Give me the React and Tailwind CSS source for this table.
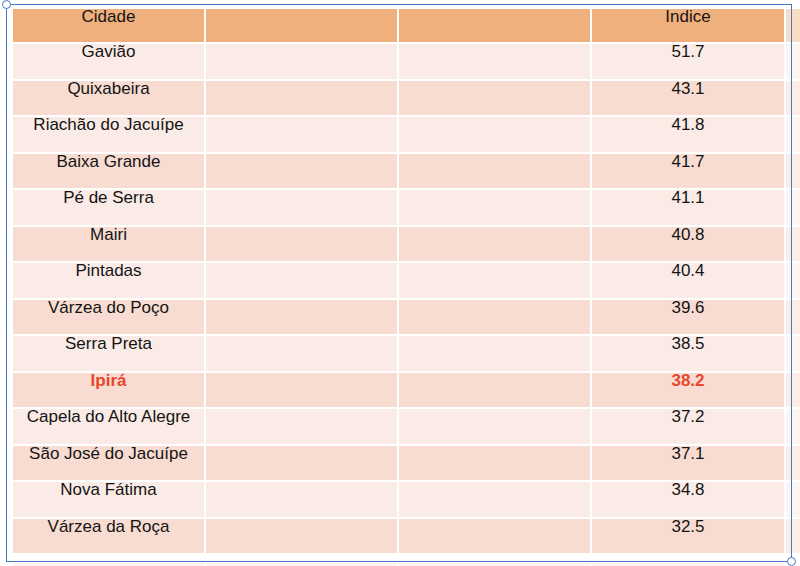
import React from "react";

const rows = [
  ["Gavião", "51.7"],
  ["Quixabeira", "43.1"],
  ["Riachão do Jacuípe", "41.8"],
  ["Baixa Grande", "41.7"],
  ["Pé de Serra", "41.1"],
  ["Mairi", "40.8"],
  ["Pintadas", "40.4"],
  ["Várzea do Poço", "39.6"],
  ["Serra Preta", "38.5"],
  ["Ipirá", "38.2", true],
  ["Capela do Alto Alegre", "37.2"],
  ["São José do Jacuípe", "37.1"],
  ["Nova Fátima", "34.8"],
  ["Várzea da Roça", "32.5"],
];

const Row = ({ city, value, highlight, index }) => {
  const odd = index % 2 === 0;
  const bg = odd ? "bg-[#fbebe6]" : "bg-[#f8dcd1]";
  const faded = odd ? "bg-[#fdf5f2]" : "bg-[#fcede7]";
  const h = odd ? "h-[35px]" : "h-[34px]";
  const text = highlight
    ? "text-[#e8462e] font-bold"
    : "text-[#141414]";

  return (
    <div className={`flex gap-[2px] mt-[2px] ${h}`}>
      <div className={`w-[191px] shrink-0 text-center leading-[16px] ${bg} ${text}`}>
        {city}
      </div>
      <div className={`w-[191px] shrink-0 ${bg}`} />
      <div className={`w-[191px] shrink-0 ${bg}`} />
      <div className={`w-[192px] shrink-0 text-center leading-[16px] ${bg} ${text}`}>
        {value}
      </div>
      <div className={`w-[40px] shrink-0 ${faded}`} />
    </div>
  );
};

export default function App() {
  return (
    <div
      className="relative w-[800px] h-[566px] overflow-hidden bg-white text-[17px]"
      style={{ fontFamily: '"Liberation Sans", Arial, sans-serif' }}
    >
      {/* tabela */}
      <div className="pl-[13px] pt-[9px]">
        <div className="flex gap-[2px] h-[33px]">
          <div className="w-[191px] shrink-0 bg-[#efb07d] text-center leading-[16px] text-[#141414]">
            Cidade
          </div>
          <div className="w-[191px] shrink-0 bg-[#efb07d]" />
          <div className="w-[191px] shrink-0 bg-[#efb07d]" />
          <div className="w-[192px] shrink-0 bg-[#efb07d] text-center leading-[16px] text-[#141414]">
            Indice
          </div>
          <div className="w-[40px] shrink-0 bg-[#f8dcc6]" />
        </div>

        {rows.map(([city, value, highlight], i) => (
          <Row key={city} city={city} value={value} highlight={highlight} index={i} />
        ))}

        {/* linha seguinte, fora da seleção */}
        <div className="flex gap-[2px] mt-[10px] h-[30px]">
          <div className="w-[191px] shrink-0 bg-[#fdf3f0]" />
          <div className="w-[191px] shrink-0 bg-[#fdf3f0]" />
          <div className="w-[191px] shrink-0 bg-[#fdf3f0]" />
          <div className="w-[192px] shrink-0 bg-[#fdf3f0]" />
        </div>
      </div>

      {/* caixa de seleção */}
      <div className="absolute left-[6px] top-[4px] w-[786px] h-[558px] border-[1.5px] border-[#4a78c8] pointer-events-none" />
      <div className="absolute left-[2px] top-0 w-[9px] h-[9px] rounded-full bg-white border-[1.5px] border-[#4a78c8]" />
      <div className="absolute left-[787px] top-[557px] w-[9px] h-[9px] rounded-full bg-white border-[1.5px] border-[#4a78c8]" />
    </div>
  );
}
